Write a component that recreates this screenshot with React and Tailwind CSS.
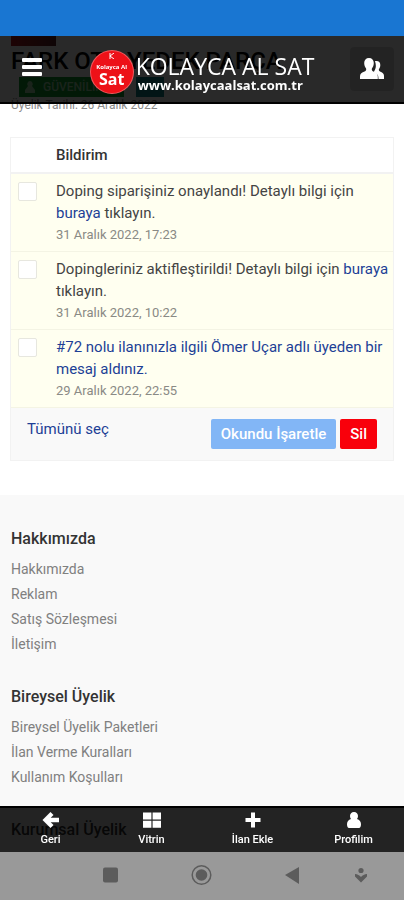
import React from 'react';

const notifications = [
  {
    id: 1,
    date: '31 Aralık 2022, 17:23',
    content: (
      <>
        Doping siparişiniz onaylandı! Detaylı bilgi için <a href="#doping" className="text-[#1d3f96]">buraya</a> tıklayın.
      </>
    ),
  },
  {
    id: 2,
    date: '31 Aralık 2022, 10:22',
    content: (
      <>
        Dopingleriniz aktifleştirildi! Detaylı bilgi için <a href="#doping" className="text-[#1d3f96]">buraya</a> tıklayın.
      </>
    ),
  },
  {
    id: 3,
    date: '29 Aralık 2022, 22:55',
    content: (
      <a href="#mesaj" className="text-[#1d3f96]">
        #72 nolu ilanınızla ilgili Ömer Uçar adlı üyeden bir mesaj aldınız.
      </a>
    ),
  },
];

const footerGroups = [
  { title: 'Hakkımızda', links: ['Hakkımızda', 'Reklam', 'Satış Sözleşmesi', 'İletişim'] },
  { title: 'Bireysel Üyelik', links: ['Bireysel Üyelik Paketleri', 'İlan Verme Kuralları', 'Kullanım Koşulları'] },
  { title: 'Kurumsal Üyelik', links: [] },
];

const tabs = [
  {
    label: 'Geri',
    icon: <path d="M.5 9 8.500 1l3 3-2.800 2.800H17v4.400H8.700l2.800 2.800-3 3z" />,
  },
  {
    label: 'Vitrin',
    icon: <path d="M0 1.500h8.400v7H0zM9.600 1.500H18v7H9.600zM0 9.700h8.400v7H0zM9.600 9.700H18v7H9.600z" />,
  },
  {
    label: 'İlan Ekle',
    icon: <path d="M7 1.500h4V7h5.500v4H11v5.500H7V11H1.500V7H7z" />,
  },
  {
    label: 'Profilim',
    icon: <path d="M9 1c2.500 0 4 1.700 4 4 0 1.200-.4 2.200-1 3 2.600.9 4 2.800 4 5.300 0 2.300-.8 3.700-2 3.700H4c-1.200 0-2-1.400-2-3.700C2 10.800 3.400 8.900 6 8c-.6-.8-1-1.800-1-3 0-2.300 1.500-4 4-4z" />,
  },
];

const Header = () => (
  <header className="fixed inset-x-0 top-9 z-20 flex h-17 items-center justify-between border-b-2 border-black bg-black/84 px-[10px]">
    <button type="button" aria-label="Menü" className="flex h-11 w-11 flex-col items-center justify-center gap-[3px] pb-1">
      <span className="h-1 w-5 rounded-[1px] bg-white" />
      <span className="h-1 w-5 rounded-[1px] bg-white" />
      <span className="h-1 w-5 rounded-[1px] bg-white" />
    </button>

    <a href="#anasayfa" className="flex items-center gap-[2px] pt-[6px] text-white">
      <span className="flex h-11 w-11 flex-col items-center rounded-full border border-white/30 bg-[#ed1118] pt-[2px] text-center font-['Open_Sans',sans-serif] font-bold">
        <svg viewBox="0 0 8 6" className="h-[6px] w-2" fill="none" stroke="white">
          <path d="M2 0v6M6 0 2 3l4 3" />
        </svg>
        <span className="mt-1 text-[6px] leading-[8px]">Kolayca Al</span>
        <span className="text-base leading-4">Sat</span>
      </span>
      <span className="flex flex-col whitespace-nowrap pt-[2px] font-['Open_Sans',sans-serif]">
        <span className="text-[23px] leading-6">KOLAYCA AL SAT</span>
        <span className="pl-[2px] text-[13px] font-bold leading-[14px]">www.kolaycaalsat.com.tr</span>
      </span>
    </a>

    <button type="button" aria-label="Hesabım" className="flex h-11 w-11 items-center justify-center rounded bg-black/15">
      <svg viewBox="0 0 24 22" className="h-[22px] w-6" fill="white">
        <path d="M16.500 3c2.400 0 3.800 1.600 3.800 4 0 1.700-.5 3-1.400 4.200-.3 1.300.3 1.900 1.600 2.500 2.300 1 3.500 2 3.500 4.300V21h-5.500c0-3.500-.8-4.700-3.600-5.900-1-.5-1.200-1.200-.6-2.200 1.300-1.900 1.700-3.900 1.500-5.900-.1-1.400-.3-2.600-.9-3.700.5-.2 1-.3 1.600-.3z" />
        <path d="M9 0c3 0 4.800 2 4.800 5 0 2.200-.7 4-1.900 5.400-.4 1.800.3 2.600 2 3.400 2.600 1.100 3.900 2.200 3.900 4.700V21H0v-2.500c0-2.500 1.400-3.600 4-4.700 1.800-.8 2.500-1.600 2.100-3.400C4.900 9 4.200 7.200 4.200 5c0-3 1.800-5 4.800-5z" />
      </svg>
    </button>
  </header>
);

const StoreInfo = () => (
  <section className="px-[11px]">
    <div className="h-[10px] w-[45px] bg-linear-to-r from-[#b5121b] to-[#5a2226]" />
    <h1 className="text-2xl font-medium leading-[31px] whitespace-nowrap text-black">FARK OTO YEDEK PARÇA</h1>
    <div className="flex gap-3 px-2">
      <span className="flex h-5 w-[105px] items-center gap-2 bg-[#0f9d2f] px-[6px] text-xs font-medium text-[#9fd6a9]">
        <svg viewBox="0 0 10 12" className="h-3 w-[10px]" fill="currentColor">
          <path d="M5 0a3 3 0 0 1 2 5l3 4v3H0V9l3-4a3 3 0 0 1 2-5z" />
        </svg>
        GÜVENİLİR
      </span>
      <span className="h-5 w-7 bg-[#12848c]" />
    </div>
    <p className="text-xs leading-4 text-[#8a8a8a]">Üyelik Tarihi: 26 Aralık 2022</p>
  </section>
);

const NotificationCard = () => (
  <section className="mx-[10px] mt-6 border border-[#f2f2f2]">
    <table className="w-full border-collapse text-left text-[15px]">
      <thead>
        <tr className="h-[35px] border-b-2 border-[#f2f2f2]">
          <th className="w-[45px]" aria-label="Seç" />
          <th className="text-[15px] font-medium leading-5 text-[#333]">Bildirim</th>
        </tr>
      </thead>
      <tbody>
        {notifications.map((item) => (
          <tr key={item.id} className="border-b border-[#f4f4e4] bg-[#fffff0] align-top">
            <td className="pt-2 pl-[7px]">
              <input
                type="checkbox"
                aria-label={`${item.date} bildirimini seç`}
                className="block h-[19px] w-[19px] appearance-none rounded-xs border border-[#e7e7df] bg-white checked:bg-[#1976d2]"
              />
            </td>
            <td className="pt-[6px] pr-1 pb-[6px] text-[#444]">
              <p className="leading-[22px]">{item.content}</p>
              <time className="block text-[13px] leading-[21px] text-[#8a8a85]">{item.date}</time>
            </td>
          </tr>
        ))}
      </tbody>
    </table>
    <div className="flex items-start justify-between bg-[#f9f9f9] py-[11px] px-4">
      <button type="button" className="text-[15px] leading-5 text-[#1d3f96]">Tümünü seç</button>
      <div className="flex gap-1">
        <button type="button" className="h-[30px] rounded-xs bg-[#82b6f6] px-[10px] text-[15px] font-medium text-white">
          Okundu İşaretle
        </button>
        <button type="button" className="h-[30px] rounded-xs bg-[#f9000b] px-[10px] text-[15px] font-medium text-white">
          Sil
        </button>
      </div>
    </div>
  </section>
);

const Footer = () => (
  <footer className="mt-[34px] flex flex-1 flex-col gap-7 bg-[#f9f9f9] px-[11px] pt-8 pb-14">
    {footerGroups.map((group) => (
      <nav key={group.title} aria-label={group.title}>
        <h2 className="mb-[6px] text-base font-medium leading-6 text-[#333]">{group.title}</h2>
        <ul>
          {group.links.map((link) => (
            <li key={link} className="text-sm leading-[25px] text-[#808080]">
              <a href="#sayfa">{link}</a>
            </li>
          ))}
        </ul>
      </nav>
    ))}
  </footer>
);

const BottomBars = () => (
  <div className="fixed inset-x-0 bottom-0 z-20">
    <nav className="grid h-[46px] grid-cols-4 border-t-2 border-black bg-black/86" aria-label="Alt menü">
      {tabs.map((tab) => (
        <a key={tab.label} href="#sekme" className="flex flex-col items-center pt-[3px] text-[11px] font-medium leading-[22px] text-white">
          <svg viewBox="0 0 18 18" className="h-[18px] w-[18px]" fill="white">{tab.icon}</svg>
          {tab.label}
        </a>
      ))}
    </nav>
    {/* system navigation */}
    <div className="flex h-12 items-center bg-[#999] text-[#5c5c5c]">
      <svg viewBox="0 0 404 48" className="h-12 w-full" fill="currentColor">
        <rect x="103" y="15.500" width="15" height="15" rx="2" />
        <circle cx="201.500" cy="23" r="9.300" fill="none" stroke="currentColor" strokeWidth="1.500" />
        <circle cx="201.500" cy="23" r="5.800" />
        <path d="M285 23 299 15v17z" />
        <circle cx="361" cy="18.500" r="2.600" />
        <path d="M355 22c2.500.2 4.400 1.200 6 3 1.600-1.800 3.500-2.800 6-3v2.500L361 30.500l-6-6z" />
      </svg>
    </div>
  </div>
);

const App = () => {
  return (
    <div className="flex min-h-screen flex-col bg-white font-[Roboto,sans-serif]">
      <div className="h-9 shrink-0 bg-[#1976d2]" />
      <Header />
      <main>
        <StoreInfo />
        <NotificationCard />
      </main>
      <Footer />
      <BottomBars />
    </div>
  );
};

export default App;
